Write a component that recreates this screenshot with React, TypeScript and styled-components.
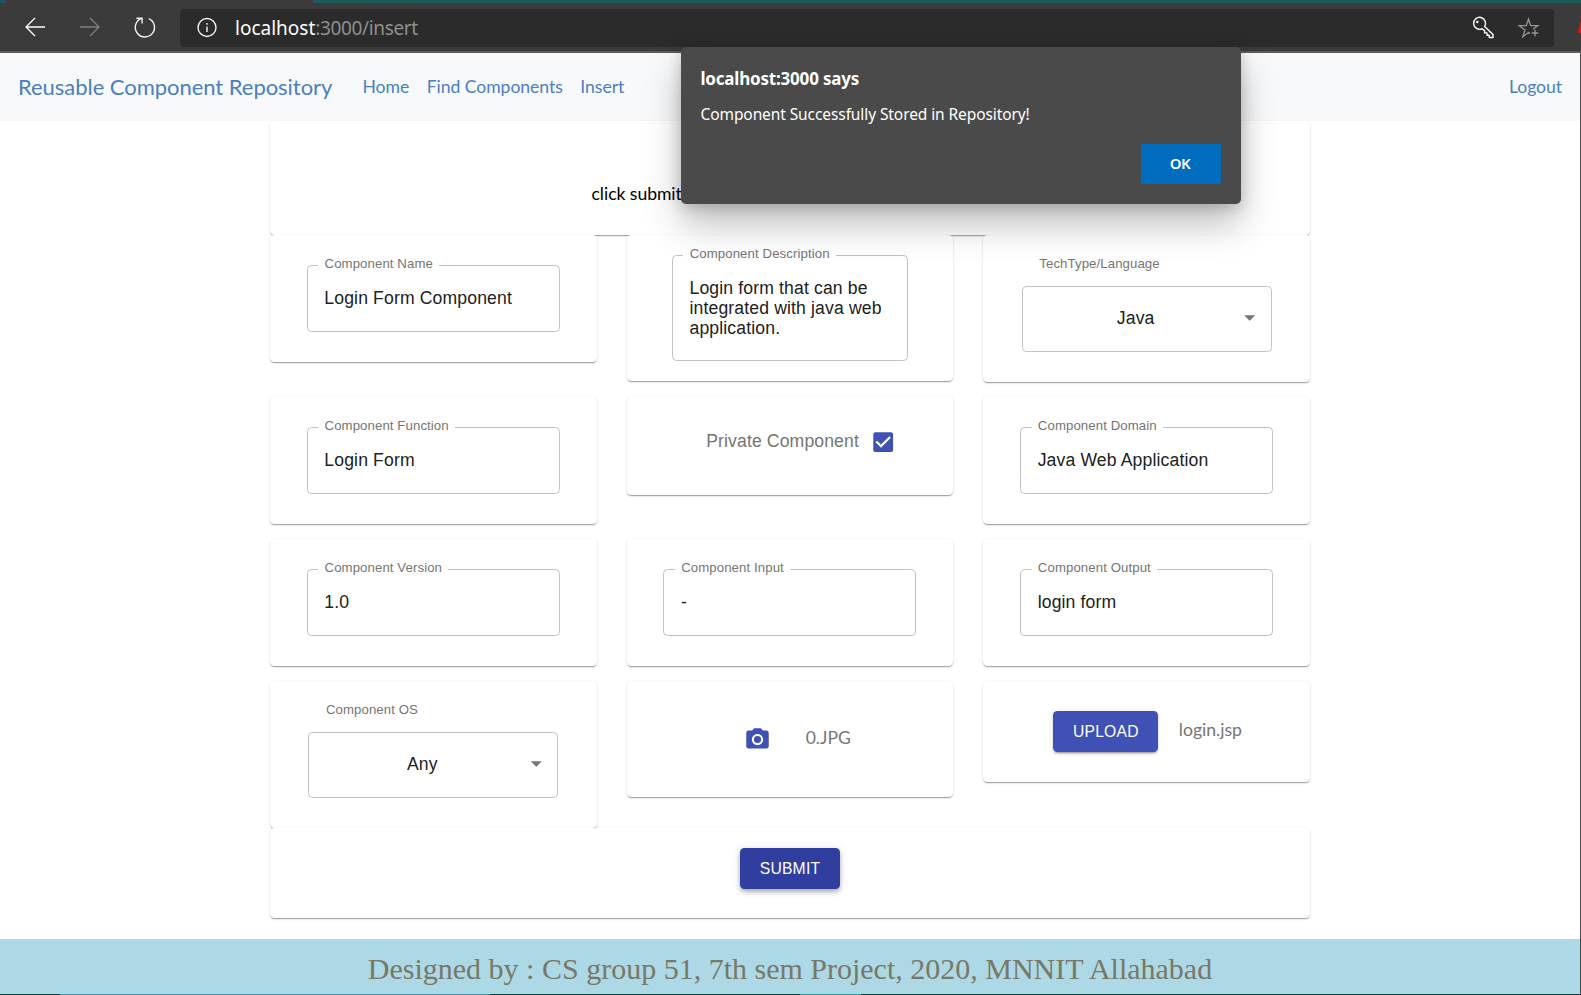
import React from 'react';
import styled, { createGlobalStyle } from 'styled-components';
import { MdCheckBox, MdPhotoCamera } from 'react-icons/md';

const Global = createGlobalStyle`
  *, *::before, *::after { box-sizing: border-box; }
  body { margin: 0; background: #fff; overflow: hidden; }
`;

const sans = "'Liberation Sans', Arial, sans-serif";
const lato = "Lato, sans-serif";
const ui = "'Noto Sans', 'Open Sans', sans-serif";

const Screen = styled.div`
  position: relative;
  width: 1581px;
  height: 995px;
  display: flex;
  flex-direction: column;
  overflow: hidden;
`;

const TabStrip = styled.div`
  flex: none;
  height: 3px;
  padding-left: 5px;
  background: #1c5a5b;
`;

const ActiveTab = styled.div`
  width: 308px;
  height: 3px;
  background: #3b3b3b;
`;

const BrowserBar = styled.header`
  flex: none;
  height: 50px;
  display: flex;
  align-items: flex-start;
  padding-top: 6px;
  background: #3b3b3b;
  border-bottom: 2px solid #5b5b5c;
`;

const ToolIcons = styled.div`
  width: 180px;
  height: 38px;
  padding: 3px 0 0 20px;
  display: flex;
  gap: 25px;
  svg { display: block; width: 30px; height: 30px; flex: none; }
`;

const AddressBar = styled.div`
  width: 1374px;
  height: 38px;
  display: flex;
  align-items: center;
  padding: 0 12px 0 15px;
  background: #2b2b2b;
  border-radius: 4px;
`;

const Url = styled.div`
  flex: 1;
  margin-left: 16px;
  font: 19px/38px ${ui};
  letter-spacing: -0.35px;
  color: #8f8f8f;
  span { color: #fff; letter-spacing: 0; }
`;

const AddressIcons = styled.div`
  display: flex;
  gap: 20px;
`;

const ExtensionEdge = styled.div`
  width: 3px;
  height: 11px;
  margin: 13px 0 0 auto;
  background: #e01010;
  clip-path: polygon(60% 0, 100% 0, 100% 100%, 0 100%);
`;

const Page = styled.div`
  flex: 1;
  display: flex;
  flex-direction: column;
  min-height: 0;
  border-right: 1px solid #4a4a4a;
`;

const Nav = styled.nav`
  flex: none;
  height: 68px;
  padding: 0 18px;
  display: flex;
  align-items: center;
  background: #f7f9fb;
  font: 17.6px/26px ${lato};
  letter-spacing: -0.06px;
  color: #4a7fc1;
`;

const Brand = styled.div`
  width: 344.5px;
  padding-bottom: 2px;
  font-size: 22px;
  line-height: 33px;
  letter-spacing: -0.04px;
`;

const NavLink = styled.a<{ $end?: boolean }>`
  margin-right: ${p => (p.$end ? 0 : 17.6)}px;
  margin-left: ${p => (p.$end ? 'auto' : 0)};
  white-space: nowrap;
`;

const Main = styled.main`
  width: 1040px;
  margin-left: 270px;
  display: flex;
  flex-direction: column;
`;

const Card = styled.section<{ $h: number; $align?: string; $pt?: number }>`
  height: ${p => p.$h}px;
  padding-top: ${p => p.$pt ?? 0}px;
  display: flex;
  flex-direction: column;
  align-items: ${p => p.$align ?? 'center'};
  background: #fff;
  border-radius: 4.4px;
  box-shadow: 0 2px 1px -1px rgba(0, 0, 0, 0.2), 0 1px 1px 0 rgba(0, 0, 0, 0.14), 0 1px 3px 0 rgba(0, 0, 0, 0.12);
`;

const Hint = styled.p`
  margin: 0;
  padding-left: 321.5px;
  font: 17.6px/26px ${lato};
  letter-spacing: -0.05px;
  color: #000;
`;

const Grid = styled.div`
  display: grid;
  grid-template-columns: repeat(3, 1fr);
  gap: 15px 30px;
  align-items: start;
  height: 593px;
`;

const Outline = styled.div<{ $w: number; $h: number }>`
  position: relative;
  width: ${p => p.$w}px;
  height: ${p => p.$h}px;
  padding: 22px 14px 0 16.5px;
  border: 1px solid #c2c2c2;
  border-radius: 4.4px;
  font: 17.6px/20px ${sans};
  letter-spacing: 0.14px;
  color: #212121;
`;

const FloatingLabel = styled.label`
  position: absolute;
  top: -10px;
  left: 10.5px;
  padding: 0 6.3px 0 6.2px;
  background: #fff;
  font: 13.2px/16px ${sans};
  letter-spacing: 0.1px;
  color: #757575;
  white-space: nowrap;
`;

const SelectGroup = styled.div`
  width: 250px;
`;

const SelectLabel = styled.label`
  display: block;
  height: 30px;
  padding-left: 17.6px;
  font: 13.2px/16px ${sans};
  letter-spacing: 0.1px;
  color: #757575;
`;

const SelectBox = styled.div`
  height: 66px;
  padding: 0 15.5px 2px 16px;
  display: grid;
  grid-template-columns: 1fr 11px;
  align-items: center;
  border: 1px solid #c2c2c2;
  border-radius: 4.4px;
  font: 17.6px/20px ${sans};
  letter-spacing: 0.14px;
  color: #212121;
  text-align: center;
`;

const SelectValue = styled.span`
  padding-right: 11.5px;
`;

const Caret = styled.i`
  width: 11px;
  height: 5.5px;
  background: #757575;
  clip-path: polygon(0 0, 100% 0, 50% 100%);
`;

const Inline = styled.div<{ $ml: number; $gap: number; $align?: string }>`
  display: flex;
  align-items: ${p => p.$align ?? 'center'};
  margin-left: ${p => p.$ml}px;
  gap: ${p => p.$gap}px;
  svg { color: #3f51b5; display: block; }
`;

const CheckLabel = styled.span`
  padding-bottom: 2px;
  font: 17.6px/26px ${sans};
  letter-spacing: 0.13px;
  color: #757575;
`;

const FileName = styled.span<{ $lift?: number }>`
  padding-bottom: ${p => p.$lift ?? 0}px;
  font: 17.6px/26px ${lato};
  color: #757575;
`;

const Button = styled.button<{ $w: number; $active?: boolean }>`
  width: ${p => p.$w}px;
  height: 41px;
  padding: 0;
  border: 0;
  border-radius: 4.4px;
  background: ${p => (p.$active ? '#303f9f' : '#3f51b5')};
  color: #fff;
  font: 15.7px/27px ${sans};
  letter-spacing: 0.2px;
  box-shadow: ${p =>
    p.$active
      ? '0 2px 4px -1px rgba(0,0,0,.2), 0 4px 5px 0 rgba(0,0,0,.14), 0 1px 10px 0 rgba(0,0,0,.12)'
      : '0 3px 1px -2px rgba(0,0,0,.2), 0 2px 2px 0 rgba(0,0,0,.14), 0 1px 5px 0 rgba(0,0,0,.12)'};
`;

const Footer = styled.footer`
  height: 55px;
  margin-top: 21px;
  background: #add8e6;
  color: #777966;
  font: 30px/59px 'Liberation Serif', 'Times New Roman', serif;
  text-align: center;
  white-space: nowrap;
  overflow: hidden;
`;

const TaskbarEdge = styled.div`
  flex: none;
  height: 1px;
  background: linear-gradient(90deg, #0c3c44 60px, #4c93a0 60px 490px, #0c3c44 490px 800px, #2a9a9c 800px 861px, #0c3c44 861px);
`;

const Dialog = styled.div`
  position: absolute;
  left: 681px;
  top: 47px;
  width: 560px;
  height: 157px;
  padding: 20px 20px 20px 19.5px;
  display: flex;
  flex-direction: column;
  background: #4a4a4a;
  border-radius: 5px;
  color: #fff;
  box-shadow: 0 20px 36px rgba(0, 0, 0, 0.26), 0 3px 14px rgba(0, 0, 0, 0.18);
`;

const DialogTitle = styled.div`
  font: 700 17px/24px ${ui};
  letter-spacing: -0.2px;
`;

const DialogText = styled.div`
  margin-top: 11px;
  font: 15.5px/24px ${ui};
  letter-spacing: -0.09px;
`;

const DialogButton = styled.button`
  width: 80px;
  height: 40px;
  margin: auto 0 0 auto;
  padding: 0 2px 2px 0;
  border: 0;
  background: #006cbe;
  color: #fff;
  font: 600 15px/36px ${ui};
  letter-spacing: -0.6px;
`;

function TextField({ label, value, w = 253, h = 67 }: { label: string; value: string; w?: number; h?: number }) {
  return (
    <Outline $w={w} $h={h}>
      <FloatingLabel>{label}</FloatingLabel>
      {value}
    </Outline>
  );
}

function SelectField({ label, value }: { label: string; value: string }) {
  return (
    <SelectGroup>
      <SelectLabel>{label}</SelectLabel>
      <SelectBox>
        <SelectValue>{value}</SelectValue>
        <Caret />
      </SelectBox>
    </SelectGroup>
  );
}

export default function App() {
  return (
    <Screen>
      <Global />
      <TabStrip><ActiveTab /></TabStrip>
      <BrowserBar>
        <ToolIcons>
          <svg viewBox="0 0 30 30" fill="none" stroke="#fff" strokeWidth="1.3"><path d="M25 15H6M15 6L6 15l9 9" /></svg>
          <svg viewBox="0 0 30 30" fill="none" stroke="#808080" strokeWidth="1.3"><path d="M5 15H24M15 6l9 9-9 9" /></svg>
          <svg viewBox="0 0 30 30" fill="none" stroke="#f4f4f4" strokeWidth="1.4"><path d="M18.8 6.6A9.6 9.6 0 1 1 11.5 6.4M6.5 6.2h5.6v5.4" /></svg>
        </ToolIcons>
        <AddressBar>
          <svg width="24" height="24" viewBox="0 0 24 24" fill="none" stroke="#f2f2f2" strokeWidth="1.4">
            <circle cx="12" cy="11.5" r="9" /><path d="M12 10.5v5.5M12 7v1.8" />
          </svg>
          <Url><span>localhost</span>:3000/insert</Url>
          <AddressIcons>
            <svg width="26" height="26" viewBox="0 0 26 26" fill="none" stroke="#fff" strokeWidth="1.4" strokeLinejoin="round">
              <path d="M14.6 11.6l8.4 7.9v3h-3.8v-2.2h-2.2v-2.4h-2.4v-2.4l-2.6-1.7A6 6 0 1 1 14.6 11.6z" />
              <circle cx="7.3" cy="7" r="1.2" fill="#fff" stroke="none" />
            </svg>
            <svg width="26" height="26" viewBox="0 0 26 26" fill="none" stroke="#969696" strokeWidth="1.3">
              <path d="M14 18.7l-1.5-1.2-5.7 4.2 2.2-6.8-5.7-4.2h7l2.2-6.7 2.2 6.7h7l-4.7 3.5M19 14.8v6.4M15.8 18h6.4" />
            </svg>
          </AddressIcons>
        </AddressBar>
        <ExtensionEdge />
      </BrowserBar>

      <Page>
        <Nav>
          <Brand>Reusable Component Repository</Brand>
          <NavLink>Home</NavLink>
          <NavLink>Find Components</NavLink>
          <NavLink>Insert</NavLink>
          <NavLink $end>Logout</NavLink>
        </Nav>
        <Main>
          <Card $h={114} $pt={60} $align="flex-start">
            <Hint>click submit</Hint>
          </Card>
          <Grid>
            <Card $h={127} $pt={30}><TextField label="Component Name" value="Login Form Component" /></Card>
            <Card $h={146} $pt={20}>
              <TextField label="Component Description" value="Login form that can be integrated with java web application." w={236} h={106} />
            </Card>
            <Card $h={147} $pt={21}><SelectField label="TechType/Language" value="Java" /></Card>

            <Card $h={127} $pt={30}><TextField label="Component Function" value="Login Form" /></Card>
            <Card $h={98} $pt={31} $align="flex-start">
              <Inline $ml={79.5} $gap={11.3}>
                <CheckLabel>Private Component</CheckLabel>
                <MdCheckBox size={26.4} />
              </Inline>
            </Card>
            <Card $h={127} $pt={30}><TextField label="Component Domain" value="Java Web Application" /></Card>

            <Card $h={127} $pt={30}><TextField label="Component Version" value="1.0" /></Card>
            <Card $h={127} $pt={30}><TextField label="Component Input" value="-" /></Card>
            <Card $h={127} $pt={30}><TextField label="Component Output" value="login form" /></Card>

            <Card $h={147} $pt={21}><SelectField label="Component OS" value="Any" /></Card>
            <Card $h={116} $pt={44} $align="flex-start">
              <Inline $ml={117} $gap={35}>
                <MdPhotoCamera size={27} />
                <FileName $lift={2}>0.JPG</FileName>
              </Inline>
            </Card>
            <Card $h={101} $pt={30} $align="flex-start">
              <Inline $ml={70} $gap={20.5}>
                <Button $w={105}>UPLOAD</Button>
                <FileName $lift={4}>login.jsp</FileName>
              </Inline>
            </Card>
          </Grid>
          <Card $h={90} $pt={20}><Button $w={100} $active>SUBMIT</Button></Card>
        </Main>
        <Footer>Designed by : CS group 51, 7th sem Project, 2020, MNNIT Allahabad</Footer>
      </Page>
      <TaskbarEdge />

      <Dialog>
        <DialogTitle>localhost:3000 says</DialogTitle>
        <DialogText>Component Successfully Stored in Repository!</DialogText>
        <DialogButton>OK</DialogButton>
      </Dialog>
    </Screen>
  );
}
